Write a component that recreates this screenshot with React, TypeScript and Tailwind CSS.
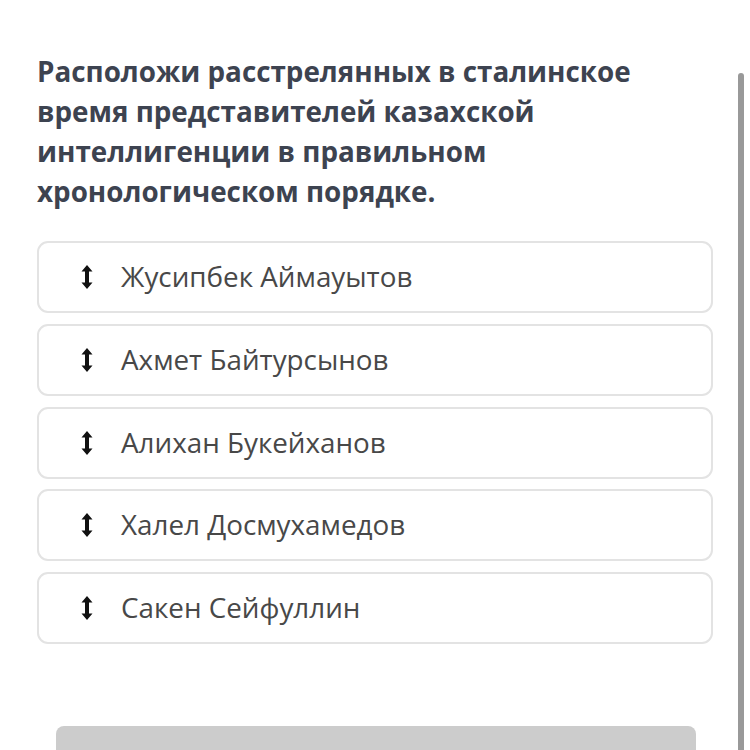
const items = [
  "Жусипбек Аймауытов",
  "Ахмет Байтурсынов",
  "Алихан Букейханов",
  "Халел Досмухамедов",
  "Сакен Сейфуллин",
];

const UpDown = () => (
  <svg width="12" height="26" viewBox="0 0 12 26" className="shrink-0">
    <path d="M6 1 L11.5 7.5 H8 V18.5 H11.5 L6 25 L0.5 18.5 H4 V7.5 H0.5 Z" fill="#111" />
  </svg>
);

export default function App() {
  return (
    <div className="relative w-[750px] h-[750px] bg-white overflow-hidden font-['Open_Sans',sans-serif]">
      <div className="pl-[37px] pr-[37px] pt-[51px]">
        <h1 className="max-w-[650px] text-[27.8px] leading-[40px] font-bold text-[#3d4350]">
          Расположи расстрелянных в сталинское время представителей казахской интеллигенции в правильном хронологическом порядке.
        </h1>
        <div className="mt-[30px] flex flex-col gap-[10.75px]">
          {items.map((t) => (
            <div
              key={t}
              className="h-[72px] w-[676px] rounded-[11px] border-2 border-[#e3e3e3] flex items-center pl-[42px] gap-[28px]"
            >
              <UpDown />
              <span className="text-[27.8px] text-[#484848]">{t}</span>
            </div>
          ))}
        </div>
        <div className="mt-[82px] ml-[19px] w-[640px] h-[40px] rounded-[8px] bg-[#cccccc]" />
      </div>
      <div className="absolute left-[738px] top-[73px] w-[6px] h-[700px] rounded-t-[3px] bg-[#999999]" />
    </div>
  );
}
